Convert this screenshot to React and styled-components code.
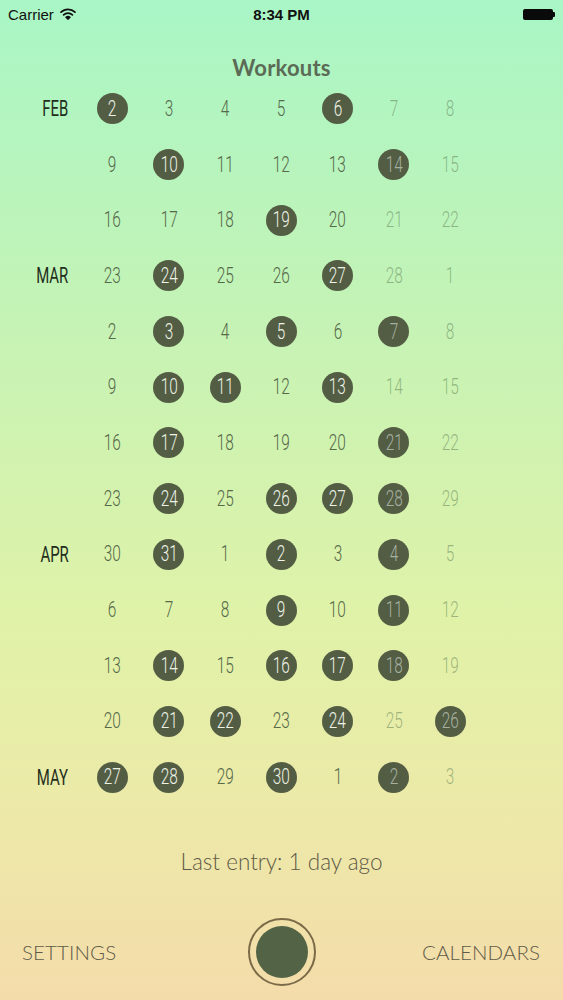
import React from "react";
import styled, { createGlobalStyle } from "styled-components";

const Global = createGlobalStyle`
  html, body { margin: 0; padding: 0; }
  body { font-family: "Lato", "Liberation Sans", sans-serif; }
`;

const Screen = styled.div`
  width: 563px;
  height: 1000px;
  overflow: hidden;
  display: flex;
  flex-direction: column;
  background: linear-gradient(180deg, #a9f6c6 0%, #c3f3b6 30%, #e0f2a8 62%, #eceaa8 80%, #f4dcaa 100%);
`;

const StatusBar = styled.div`
  height: 28px;
  display: grid;
  grid-template-columns: 1fr auto 1fr;
  align-items: center;
  padding: 0 8px;
  font-family: "Liberation Sans", Arial, sans-serif;
  font-size: 15px;
  color: #111;
`;

const Carrier = styled.div`
  display: flex;
  align-items: center;
  gap: 6px;
`;

const Clock = styled.div`
  font-weight: 700;
  font-size: 15px;
`;

const BatteryWrap = styled.div`
  justify-self: end;
  display: flex;
  align-items: center;
`;

const BatteryBody = styled.div`
  width: 30px;
  height: 11px;
  background: #0a0a0a;
  border-radius: 2px;
`;

const BatteryNub = styled.div`
  width: 2px;
  height: 5px;
  background: #0a0a0a;
  border-radius: 0 1px 1px 0;
`;

const Title = styled.h1`
  margin: 28px 0 0;
  height: 24px;
  line-height: 24px;
  text-align: center;
  font-family: "Lato", sans-serif;
  font-weight: 700;
  font-size: 22px;
  color: #5b6b55;
  letter-spacing: 0.2px;
`;

const Grid = styled.div`
  margin-top: 1px;
  margin-left: 28px;
  display: grid;
  grid-template-columns: repeat(8, 56.3px);
  grid-auto-rows: 55.7px;
`;

const Cell = styled.div`
  display: flex;
  align-items: center;
  justify-content: ${(p) => (p.$label ? "flex-end" : "center")};
  padding-right: ${(p) => (p.$label ? "16px" : "0")};
`;

const MonthLabel = styled.span`
  display: inline-block;
  font-family: "Roboto", sans-serif;
  font-size: 22px;
  color: #1f2f1c;
  transform: scaleX(0.68);
  transform-origin: right center;
`;

const Dot = styled.div`
  width: 31px;
  height: 31px;
  border-radius: 50%;
  display: flex;
  align-items: center;
  justify-content: center;
  background: ${(p) => (p.$filled ? "#535d44" : "transparent")};
`;

const Num = styled.span`
  display: inline-block;
  font-family: "Roboto", sans-serif;
  font-weight: 300;
  font-size: 22px;
  line-height: 1;
  transform: scaleX(0.7);
  color: ${(p) =>
    p.$filled
      ? p.$weekend
        ? "#a6b0a0"
        : "#eef3e6"
      : p.$weekend
      ? "rgba(90, 120, 80, 0.5)"
      : "#56694a"};
`;

const LastEntry = styled.div`
  margin-top: 45px;
  height: 24px;
  line-height: 24px;
  text-align: center;
  font-family: "Lato", sans-serif;
  font-weight: 300;
  font-size: 22.5px;
  color: #5f5a47;
`;

const BottomBar = styled.div`
  margin-top: 42px;
  height: 72px;
  display: grid;
  grid-template-columns: 1fr auto 1fr;
  align-items: center;
  padding: 0 22px;
`;

const NavLabel = styled.div`
  font-family: "Lato", sans-serif;
  font-weight: 300;
  font-size: 20.5px;
  color: #5f5b48;
  justify-self: ${(p) => (p.$right ? "end" : "start")};
  letter-spacing: 0.1px;
  margin-right: ${(p) => (p.$right ? "1px" : "0")};
`;

const Ring = styled.div`
  width: 64px;
  height: 64px;
  border-radius: 50%;
  border: 2px solid #7a6a48;
  display: flex;
  align-items: center;
  justify-content: center;
`;

const Core = styled.div`
  width: 52px;
  height: 52px;
  border-radius: 50%;
  background: #526445;
`;

const rows = [
  ["FEB", [[2, 1], [3], [4], [5], [6, 1], [7], [8]]],
  ["", [[9], [10, 1], [11], [12], [13], [14, 1], [15]]],
  ["", [[16], [17], [18], [19, 1], [20], [21], [22]]],
  ["MAR", [[23], [24, 1], [25], [26], [27, 1], [28], [1]]],
  ["", [[2], [3, 1], [4], [5, 1], [6], [7, 1], [8]]],
  ["", [[9], [10, 1], [11, 1], [12], [13, 1], [14], [15]]],
  ["", [[16], [17, 1], [18], [19], [20], [21, 1], [22]]],
  ["", [[23], [24, 1], [25], [26, 1], [27, 1], [28, 1], [29]]],
  ["APR", [[30], [31, 1], [1], [2, 1], [3], [4, 1], [5]]],
  ["", [[6], [7], [8], [9, 1], [10], [11, 1], [12]]],
  ["", [[13], [14, 1], [15], [16, 1], [17, 1], [18, 1], [19]]],
  ["", [[20], [21, 1], [22, 1], [23], [24, 1], [25], [26, 1]]],
  ["MAY", [[27, 1], [28, 1], [29], [30, 1], [1], [2, 1], [3]]],
];

function Wifi() {
  return (
    <svg width="16" height="12" viewBox="0 0 16 12">
      <path d="M1 4.2 A10 10 0 0 1 15 4.2" fill="none" stroke="#111" strokeWidth="1.7" strokeLinecap="round" />
      <path d="M3.6 6.9 A6.4 6.4 0 0 1 12.4 6.9" fill="none" stroke="#111" strokeWidth="1.7" strokeLinecap="round" />
      <path d="M5.9 9.3 A3.1 3.1 0 0 1 10.1 9.3 L8 11.3 Z" fill="#111" stroke="#111" strokeWidth="1.2" strokeLinejoin="round" />
    </svg>
  );
}

export default function App() {
  return (
    <Screen>
      <Global />
      <StatusBar>
        <Carrier>
          <span>Carrier</span>
          <Wifi />
        </Carrier>
        <Clock>8:34 PM</Clock>
        <BatteryWrap>
          <BatteryBody />
          <BatteryNub />
        </BatteryWrap>
      </StatusBar>
      <Title>Workouts</Title>
      <Grid>
        {rows.map(([month, days], ri) => (
          <React.Fragment key={ri}>
            <Cell $label>{month && <MonthLabel>{month}</MonthLabel>}</Cell>
            {days.map(([d, f], ci) => (
              <Cell key={ci}>
                <Dot $filled={!!f}>
                  <Num $filled={!!f} $weekend={ci >= 5}>
                    {d}
                  </Num>
                </Dot>
              </Cell>
            ))}
          </React.Fragment>
        ))}
      </Grid>
      <LastEntry>Last entry: 1 day ago</LastEntry>
      <BottomBar>
        <NavLabel>SETTINGS</NavLabel>
        <Ring>
          <Core />
        </Ring>
        <NavLabel $right>CALENDARS</NavLabel>
      </BottomBar>
    </Screen>
  );
}
